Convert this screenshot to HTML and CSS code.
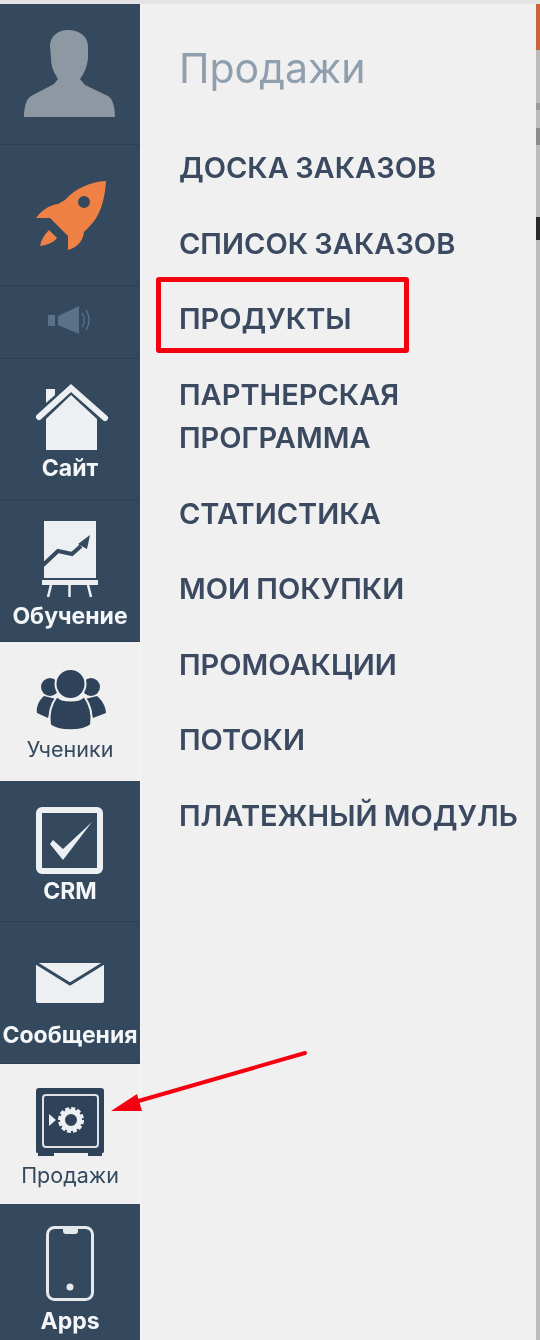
FILE: index.html
```html
<!DOCTYPE html>
<html>

<head>
    <title>Продажи</title>
    <meta charset="UTF-8">
    <link rel="stylesheet" href="styles.css">
</head>

<body>
    <div class="page">
        <div class="sidebar">
            <div class="nav-item avatar">
                <svg class="nav-icon" width="140" height="140" viewBox="0 4 140 140">
                    <path fill="#8e98a3" d="M68 30C57 30 50 37 50 46L51 58C51 68 55 74 58 79L54 84L31 96C26 99 24 108 24 117H115C115 108 113 99 108 96L85 85L80 79C84 74 87 67 88 58L88 46C88 37 80 30 68 30Z" />
                </svg>
            </div>
            <div class="nav-item rocket">
                <svg class="nav-icon" width="140" height="140" viewBox="0 145 140 140">
                    <path fill="#f08145" fill-rule="evenodd" d="M106 181C90 182 76 188 65 200L58 204C49 205 41 211 36 218L50 218L68 236L68 250C76 248 83 242 84 232L88 228C100 217 105 200 106 181ZM84 196A6 6 0 1 0 84 208A6 6 0 1 0 84 196Z" />
                    <path fill="#f08145" d="M49 230L57 238C53 243 47 245 40 246C41 240 44 235 49 230Z" />
                </svg>
            </div>
            <div class="nav-item speaker">
                <svg class="nav-icon" width="140" height="72" viewBox="0 286 140 72">
                    <rect x="48" y="315" width="7" height="11" fill="#5a7188" />
                    <path fill="#5a7188" d="M58 316L79 306V334L58 325Z" />
                    <path fill="none" stroke="#5a7188" stroke-width="1.4" d="M82 313C85 317 85 323 82 327M86 310C90 316 90 324 86 330" />
                </svg>
            </div>
            <div class="nav-item site">
                <svg class="nav-icon" width="140" height="97" viewBox="0 359 140 97">
                    <path fill="#edf0f2" d="M46 389H55V395L46 403ZM71 395L97 419V450H46V419Z" />
                    <path fill="none" stroke="#edf0f2" stroke-width="6" stroke-linecap="round" d="M39 417L71 388L105 418" />
                </svg>
                <div class="nav-label">Сайт</div>
            </div>
            <div class="nav-item learning">
                <svg class="nav-icon" width="140" height="104" viewBox="0 500 140 104">
                    <path fill="#edf0f2" d="M44 521H96V578H44Z" />
                    <path fill="none" stroke="#34495e" stroke-width="4" d="M42 566L58 551L72 554L81 546" />
                    <path fill="#34495e" d="M78 544L90 535L87 549Z" />
                    <rect x="42" y="580" width="56" height="5" fill="#edf0f2" />
                    <path fill="none" stroke="#edf0f2" stroke-width="2.5" d="M51 585L48 597M69.500 585V597M88 585L91 597" />
                </svg>
                <div class="nav-label">Обучение</div>
            </div>
            <div class="nav-item students active">
                <svg class="nav-icon" width="140" height="95" viewBox="0 642 140 95">
                    <circle cx="50" cy="687" r="9" fill="#2e435a" />
                    <circle cx="91" cy="687" r="9" fill="#2e435a" />
                    <path fill="#2e435a" d="M44 696L56 699L48 718L37 713C36 707 39 700 44 696ZM97 696L85 699L93 718L106 713C106 707 102 700 97 696Z" />
                    <circle cx="70.500" cy="684" r="15" fill="#2e435a" stroke="#f0f0f0" stroke-width="2" />
                    <path fill="#2e435a" stroke="#f0f0f0" stroke-width="2" d="M57 696C62 702 79 702 84 696C89 703 93 714 91 725C83 732 58 732 50 725C48 714 52 703 57 696Z" />
                </svg>
                <div class="nav-label">Ученики</div>
            </div>
            <div class="nav-item crm">
                <svg class="nav-icon" width="140" height="98" viewBox="0 781 140 98">
                    <rect x="39" y="810" width="61" height="61" rx="3" fill="none" stroke="#edf0f2" stroke-width="6" />
                    <path fill="#edf0f2" d="M50 844L53 840L63 849L92 822L63 860Z" />
                </svg>
                <div class="nav-label">CRM</div>
            </div>
            <div class="nav-item messages">
                <svg class="nav-icon" width="140" height="101" viewBox="0 922 140 101">
                    <rect x="36" y="963" width="68" height="40" rx="2" fill="#edf0f2" />
                    <path fill="none" stroke="#34495e" stroke-width="3" d="M36 963L70 984L104 963" />
                </svg>
                <div class="nav-label">Сообщения</div>
            </div>
            <div class="nav-item sales active">
                <svg class="nav-icon" width="140" height="99" viewBox="0 1064 140 99">
                    <path fill="#2e435a" d="M39 1088H101C103 1088 104 1089 104 1091V1151C104 1153 103 1153 102 1153V1156H88V1153H54V1156H38V1153C37 1153 36 1153 36 1151V1091C36 1089 37 1088 39 1088Z" />
                    <rect x="43" y="1095" width="55" height="52" rx="3" fill="none" stroke="#dfe3e7" stroke-width="2" />
                    <circle cx="71" cy="1120" r="8.500" fill="none" stroke="#edf0f2" stroke-width="5" />
                    <circle cx="71" cy="1120" r="11.500" fill="none" stroke="#edf0f2" stroke-width="3" stroke-dasharray="4 2" />
                    <path fill="#edf0f2" d="M49 1114L56 1120L49 1126Z" />
                </svg>
                <div class="nav-label">Продажи</div>
            </div>
            <div class="nav-item apps">
                <svg class="nav-icon" width="140" height="105" viewBox="0 1204 140 105">
                    <rect x="47.500" y="1227.500" width="45" height="72" rx="7" fill="none" stroke="#e6e9ec" stroke-width="3" />
                    <path fill="#e6e9ec" d="M63 1228H78V1231C78 1233 77 1234 75 1234H66C64 1234 63 1233 63 1231Z" />
                    <circle cx="70" cy="1287" r="3.500" fill="#e6e9ec" />
                </svg>
                <div class="nav-label">Apps</div>
            </div>
        </div>

        <div class="panel">
            <div class="panel-title">Продажи</div>
            <div class="menu">
                <div class="menu-item">ДОСКА ЗАКАЗОВ</div>
                <div class="menu-item">СПИСОК ЗАКАЗОВ</div>
                <div class="menu-item">ПРОДУКТЫ</div>
                <div class="menu-item">ПАРТНЕРСКАЯ<br>ПРОГРАММА</div>
                <div class="menu-item">СТАТИСТИКА</div>
                <div class="menu-item">МОИ ПОКУПКИ</div>
                <div class="menu-item">ПРОМОАКЦИИ</div>
                <div class="menu-item">ПОТОКИ</div>
                <div class="menu-item">ПЛАТЕЖНЫЙ МОДУЛЬ</div>
            </div>
        </div>

        <div class="edge">
            <div class="edge-orange"></div>
            <div class="edge-gap-a"></div>
            <div class="edge-dark-a"></div>
            <div class="edge-gap-b"></div>
            <div class="edge-dark-b"></div>
            <div class="edge-gap-c"></div>
            <div class="edge-black"></div>
        </div>

        <!-- annotations drawn on top of the screenshot -->
        <div class="red-box"></div>
        <svg class="red-arrow" width="210" height="70" viewBox="100 1045 210 70">
            <path fill="none" stroke="#f5000f" stroke-width="4" stroke-linecap="round" d="M305 1053L135 1102" />
            <path fill="#f5000f" d="M111 1111L137 1094L142 1111Z" />
        </svg>
    </div>
</body>

</html>
```

FILE: styles.css
```css
body {
    margin: 0;
    padding: 0;
    background-color: #f0f0f0;
    font-family: 'Inter', 'Liberation Sans', sans-serif;
    color: #34495e;
}

.page {
    position: relative;
    display: flex;
    width: 540px;
    height: 1340px;
    box-sizing: border-box;
    border-top: 4px solid #e4e4e4;
    overflow: hidden;
    filter: blur(0.5px);
}

/* Left icon column */

.sidebar {
    width: 140px;
    flex-shrink: 0;
    background-color: #34495e;
}

.nav-item {
    border-bottom: 1px solid #2d4054;
    box-sizing: border-box;
}

.nav-item.avatar {
    height: 141px;
}

.nav-item.rocket {
    height: 141px;
}

.nav-item.speaker {
    height: 73px;
}

.nav-item.site {
    height: 141px;
}

.nav-item.learning {
    height: 142px;
}

.nav-item.students {
    height: 139px;
}

.nav-item.crm {
    height: 141px;
}

.nav-item.messages {
    height: 142px;
}

.nav-item.sales {
    height: 140px;
}

.nav-item.apps {
    border-bottom: 0;
    height: 136px;
}

.nav-item.active {
    background-color: #f0f0f0;
    border-bottom: 0;
}

.nav-icon {
    display: block;
}

.nav-label {
    height: 24px;
    line-height: 24px;
    font-size: 23px;
    font-weight: 700;
    text-align: center;
    white-space: nowrap;
    color: #f4f6f8;
}

.nav-item.active .nav-label {
    font-size: 21.500px;
    font-weight: 400;
    color: #34495e;
}

/* Sub menu */

.panel {
    flex-grow: 1;
    padding: 40px 0 0 38px;
    background-color: #f0f0f0;
    border-left: 1px solid #f6f6f6;
    box-sizing: border-box;
}

.panel-title {
    font-size: 41px;
    line-height: 48px;
    color: #8f9fae;
}

.menu {
    margin-top: 38px;
}

.menu-item {
    padding: 16px 0;
    font-size: 29px;
    font-weight: 600;
    line-height: 43.500px;
    word-spacing: -1px;
    white-space: nowrap;
    color: #3b4a60;
}

/* Strip of the page behind the menu */

.edge {
    width: 4px;
    flex-shrink: 0;
    background-color: #bcbcbc;
}

.edge-orange {
    height: 46px;
    background-color: #c9653a;
}

.edge-gap-a {
    height: 53px;
}

.edge-dark-a {
    height: 7px;
    background-color: #9a9a9a;
}

.edge-gap-b {
    height: 18px;
}

.edge-dark-b {
    height: 17px;
    background-color: #8c8c8c;
}

.edge-gap-c {
    height: 72px;
}

.edge-black {
    height: 23px;
    background-color: #2a2a2a;
}

/* Annotations */

.red-box {
    position: absolute;
    top: 273px;
    left: 156px;
    width: 253px;
    height: 76px;
    box-sizing: border-box;
    border: 5px solid #f5000f;
    border-radius: 3px;
}

.red-arrow {
    position: absolute;
    top: 1041px;
    left: 100px;
}
```
